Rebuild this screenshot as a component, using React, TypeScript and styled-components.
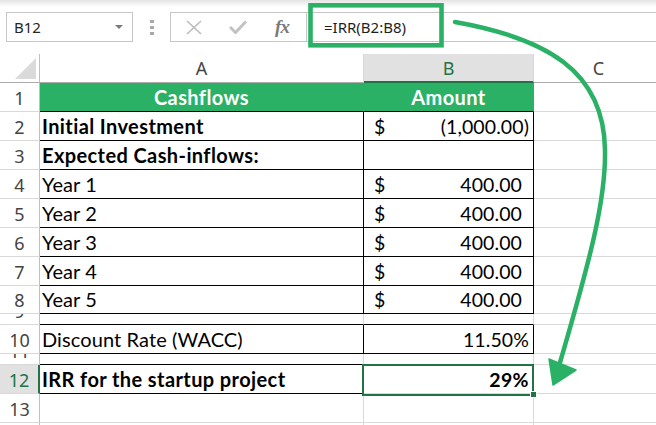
import React from 'react';
import styled, { createGlobalStyle } from 'styled-components';

const GREEN = '#2ab166';
const SEL = '#217346';
const GRID = '#d9d9d9';

const GlobalStyle = createGlobalStyle`
  html, body {
    margin: 0;
    padding: 0;
    background: #fff;
    overflow: hidden;
  }
`;

const Page = styled.div`
  position: relative;
  width: 656px;
  height: 425px;
  overflow: hidden;
  background: #fff;
`;

// formula toolbar
const Toolbar = styled.div`
  display: flex;
  align-items: stretch;
  height: 54px;
  box-sizing: border-box;
  padding: 12px 0 12px 6px;
  background: linear-gradient(to bottom, #e4e4e4 0px, #fff 7px);
  font-family: 'Noto Sans', 'Open Sans', sans-serif;
`;

const NameBox = styled.div`
  width: 127px;
  box-sizing: border-box;
  border: 1px solid #c6c6c6;
  background: #fff;
  display: flex;
  align-items: center;
  justify-content: space-between;
  padding: 0 9px 0 7px;
  font-size: 15px;
  color: #262626;
`;

const Caret = styled.span`
  width: 0;
  height: 0;
  border-left: 4px solid transparent;
  border-right: 4px solid transparent;
  border-top: 4px solid #7a7a7a;
`;

const Grip = styled.div`
  width: 37px;
  display: flex;
  flex-direction: column;
  align-items: center;
  justify-content: center;
  gap: 3px;

  span {
    width: 4px;
    height: 3px;
    background: #a8a8a8;
  }
`;

const FuncBox = styled.div`
  width: 137px;
  box-sizing: border-box;
  border: 1px solid #c6c6c6;
  background: #fff;
  display: flex;
  align-items: center;
  padding-left: 1px;
`;

const FuncSlot = styled.div`
  width: 44px;
  display: flex;
  justify-content: center;
  align-items: center;
`;

const Fx = styled.span`
  font-family: 'Liberation Serif', serif;
  font-style: italic;
  font-weight: 700;
  font-size: 19px;
  color: #7a7a7a;
  letter-spacing: -1px;
`;

const FormulaBar = styled.div`
  flex: 1;
  border-top: 1px solid #c6c6c6;
  border-bottom: 1px solid #c6c6c6;
  display: flex;
  align-items: center;
  padding-left: 17px;
  font-size: 15px;
  color: #1f1f1f;
`;

// sheet
const Sheet = styled.div`
  display: grid;
  grid-template-columns: 40px 324px 170px 130px;
  grid-template-rows: 29px repeat(7, 29px) 28px 11px 29px 11px 29px 29px 29px;
`;

const Corner = styled.div`
  position: relative;
  box-sizing: border-box;
  border-right: 1px solid #bfbfbf;
  border-bottom: 1px solid #ababab;

  &::after {
    content: '';
    position: absolute;
    right: 3px;
    bottom: 3px;
    width: 0;
    height: 0;
    border-left: 21px solid transparent;
    border-bottom: 21px solid #dadada;
  }
`;

const ColHead = styled.div<{ $active?: boolean }>`
  box-sizing: border-box;
  display: flex;
  align-items: center;
  justify-content: center;
  font-family: 'Noto Sans', 'Open Sans', sans-serif;
  font-size: 18px;
  color: ${(p) => (p.$active ? SEL : '#444')};
  background: ${(p) => (p.$active ? '#e1e1e1' : '#fff')};
  border-right: 1px solid ${GRID};
  border-bottom: ${(p) => (p.$active ? `2px solid ${SEL}` : '1px solid #ababab')};
`;

const RowHead = styled.div<{ $active?: boolean }>`
  box-sizing: border-box;
  display: flex;
  align-items: flex-end;
  justify-content: center;
  overflow: hidden;
  font-family: 'Noto Sans', 'Open Sans', sans-serif;
  font-size: 18px;
  line-height: 26px;
  color: ${(p) => (p.$active ? SEL : '#444')};
  background: ${(p) => (p.$active ? '#e1e1e1' : '#fff')};
  border-bottom: 1px solid ${GRID};
  border-right: ${(p) => (p.$active ? `2px solid ${SEL}` : '1px solid #bfbfbf')};
`;

type Edge = 'black' | 'grid' | 'fill';
const edge = (e?: Edge) => (e === 'black' ? '#000' : e === 'fill' ? GREEN : GRID);

const Cell = styled.div<{
  $fill?: boolean;
  $bold?: boolean;
  $bb?: Edge;
  $br?: Edge;
  $align?: 'left' | 'center' | 'right' | 'money';
}>`
  position: relative;
  box-sizing: border-box;
  display: flex;
  align-items: flex-end;
  justify-content: ${(p) =>
    p.$align === 'center'
      ? 'center'
      : p.$align === 'right'
      ? 'flex-end'
      : p.$align === 'money'
      ? 'space-between'
      : 'flex-start'};
  overflow: hidden;
  white-space: nowrap;
  padding: ${(p) => (p.$align === 'money' ? '0 4px 0 10px' : p.$align === 'right' ? '0 4px 0 2px' : '0 2px')};
  font-family: Lato, 'Liberation Sans', sans-serif;
  font-size: ${(p) => (p.$align === 'money' || p.$align === 'right' ? '19.5px' : '20px')};
  line-height: 27px;
  font-weight: ${(p) => (p.$bold ? 700 : 400)};
  letter-spacing: ${(p) => (p.$bold ? '0.4px' : '0.1px')};
  color: ${(p) => (p.$fill ? '#fff' : '#000')};
  background: ${(p) => (p.$fill ? GREEN : '#fff')};
  border-bottom: 1px solid ${(p) => edge(p.$bb)};
  border-right: 1px solid ${(p) => edge(p.$br)};
`;

const Amount = styled.span<{ $neg?: boolean }>`
  padding-right: ${(p) => (p.$neg ? '0' : '7px')};
`;

const SelectedCell = styled(Cell)`
  overflow: visible;
  z-index: 2;

  &::after {
    content: '';
    position: absolute;
    left: -2px;
    top: -1px;
    right: -1px;
    bottom: -3px;
    border: 2px solid ${SEL};
    pointer-events: none;
  }

  &::before {
    content: '';
    position: absolute;
    right: -3px;
    bottom: -4px;
    width: 5px;
    height: 5px;
    background: ${SEL};
    box-shadow: 0 0 0 1px #fff;
    z-index: 3;
  }
`;

const Overlay = styled.svg`
  position: absolute;
  left: 0;
  top: 0;
  pointer-events: none;
  z-index: 5;
`;

const years = [1, 2, 3, 4, 5];

const Money = ({ value, neg }: { value: string; neg?: boolean }) => (
  <>
    <span>$</span>
    <Amount $neg={neg}>{value}</Amount>
  </>
);

const CrossIcon = () => (
  <svg width="16" height="15" viewBox="0 0 16 15">
    <path d="M1 1 L15 14 M15 1 L1 14" stroke="#bdbdbd" strokeWidth="1.7" fill="none" />
  </svg>
);

const CheckIcon = () => (
  <svg width="18" height="14" viewBox="0 0 18 14">
    <path d="M1 7 L6.5 12.5 L17 1.5" stroke="#c2c2c2" strokeWidth="3" fill="none" />
  </svg>
);

export default function App() {
  return (
    <Page>
      <GlobalStyle />
      <Toolbar>
        <NameBox>
          B12
          <Caret />
        </NameBox>
        <Grip>
          <span />
          <span />
          <span />
        </Grip>
        <FuncBox>
          <FuncSlot>
            <CrossIcon />
          </FuncSlot>
          <FuncSlot>
            <CheckIcon />
          </FuncSlot>
          <FuncSlot>
            <Fx>fx</Fx>
          </FuncSlot>
        </FuncBox>
        <FormulaBar>=IRR(B2:B8)</FormulaBar>
      </Toolbar>

      <Sheet>
        <Corner />
        <ColHead>A</ColHead>
        <ColHead $active>B</ColHead>
        <ColHead>C</ColHead>

        <RowHead>1</RowHead>
        <Cell $fill $bold $align="center" $bb="black" $br="fill">Cashflows</Cell>
        <Cell $fill $bold $align="center" $bb="black" $br="fill">Amount</Cell>
        <Cell />

        <RowHead>2</RowHead>
        <Cell $bold $bb="black" $br="black">Initial Investment</Cell>
        <Cell $align="money" $bb="black" $br="black">
          <Money value="(1,000.00)" neg />
        </Cell>
        <Cell />

        <RowHead>3</RowHead>
        <Cell $bold $bb="black" $br="black">Expected Cash-inflows:</Cell>
        <Cell $bb="black" $br="black" />
        <Cell />

        {years.map((y) => (
          <React.Fragment key={y}>
            <RowHead>{y + 3}</RowHead>
            <Cell $bb="black" $br="black">Year {y}</Cell>
            <Cell $align="money" $bb="black" $br="black">
              <Money value="400.00" />
            </Cell>
            <Cell />
          </React.Fragment>
        ))}

        <RowHead>9</RowHead>
        <Cell $bb="black" />
        <Cell $bb="black" />
        <Cell />

        <RowHead>10</RowHead>
        <Cell $bb="black" $br="black">Discount Rate (WACC)</Cell>
        <Cell $align="right" $bb="black" $br="black">11.50%</Cell>
        <Cell />

        <RowHead>11</RowHead>
        <Cell $bb="black" />
        <Cell />
        <Cell />

        <RowHead $active>12</RowHead>
        <Cell $bold $bb="black">IRR for the startup project</Cell>
        <SelectedCell $bold $align="right">29%</SelectedCell>
        <Cell />

        <RowHead>13</RowHead>
        <Cell />
        <Cell />
        <Cell />

        <RowHead>14</RowHead>
        <Cell />
        <Cell />
        <Cell />
      </Sheet>

      {/* annotation: highlight around formula and curved arrow to the result */}
      <Overlay width="656" height="425" viewBox="0 0 656 425">
        <rect x="310.5" y="5.3" width="131" height="40" fill="none" stroke={GREEN} strokeWidth="4.6" />
        <path
          d="M455 22 C545 38, 604 70, 605 150 C606 200, 590 260, 559 366"
          fill="none"
          stroke={GREEN}
          strokeWidth="4.5"
          strokeLinecap="round"
        />
        <polygon points="553,385 549,359 576,370" fill={GREEN} stroke={GREEN} strokeWidth="1.5" strokeLinejoin="round" />
      </Overlay>
    </Page>
  );
}
